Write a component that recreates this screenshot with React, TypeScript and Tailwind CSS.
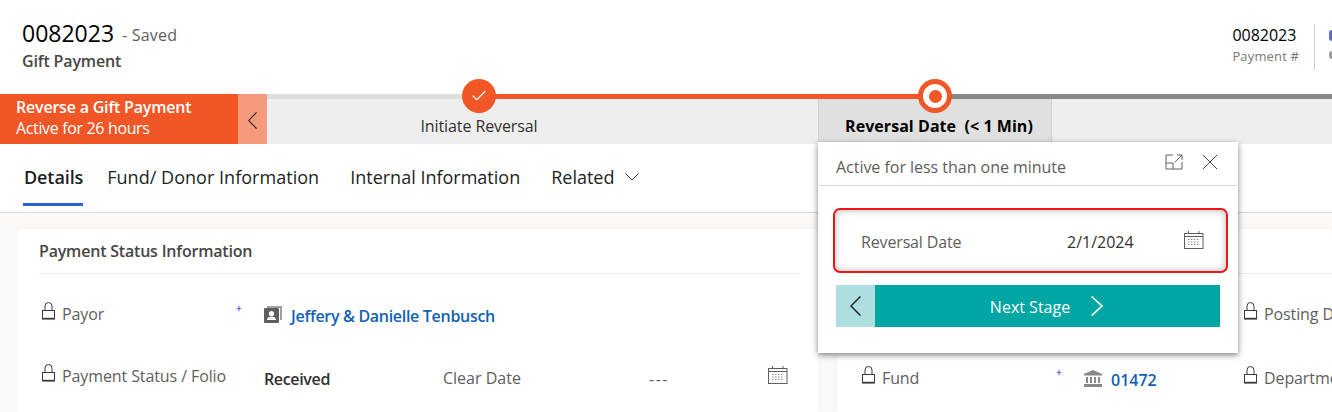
import {Check} from "lucide-react";

const font = "font-['Open_Sans','Noto_Sans',sans-serif]";

function Lock() {
    return (
        <svg width="13" height="18" viewBox="0 0 13 18" fill="none" stroke="#3b3a39" strokeWidth="1" className="shrink-0 -mt-[6px]">
            <rect x="0.5" y="8.5" width="12" height="8.5" fill="none" />
            <path d="M3 8.5V4a3.5 3.5 0 0 1 7 0v4.5" />
            <path d="M0.5 16.5h12" strokeWidth="1.4" />
        </svg>
    );
}

function CalendarIcon() {
    return (
        <svg width="20" height="18" viewBox="0 0 20 18" fill="none" stroke="#605e5c" strokeWidth="1" className="shrink-0 -mt-[2px]">
            <rect x="0.5" y="2.5" width="18.5" height="15" />
            <path d="M0.5 5.5h18.5M4.5 0v3M15 0v3" />
            <path d="M4 8.5h12M4 11h12M4 13.5h12" stroke="#8a8886" strokeDasharray="1.5 1.5" />
        </svg>
    );
}

function PopoutIcon() {
    return (
        <svg width="18" height="16" viewBox="0 0 18 16" fill="none" stroke="#605e5c" strokeWidth="1">
            <path d="M8 1H1v14h16V8" />
            <path d="M1 9h7v6" />
            <path d="M10 8l7-7M12 1h5v5" />
        </svg>
    );
}

function CloseIcon() {
    return (
        <svg width="16" height="16" viewBox="0 0 16 16" fill="none" stroke="#484644" strokeWidth="1">
            <path d="M1 1l14 14M15 1L1 15" />
        </svg>
    );
}

function ChevronL({w, h, color}: {w: number; h: number; color: string}) {
    return (
        <svg width={w} height={h} viewBox="0 0 10 20" preserveAspectRatio="none" fill="none" stroke={color} strokeWidth="1.3">
            <path d="M9.5 0.5L0.8 10l8.7 9.5" />
        </svg>
    );
}

function ChevronR({w, h, color}: {w: number; h: number; color: string}) {
    return (
        <svg width={w} height={h} viewBox="0 0 10 20" preserveAspectRatio="none" fill="none" stroke={color} strokeWidth="1.5">
            <path d="M0.5 0.5L9.2 10l-8.7 9.5" />
        </svg>
    );
}

function ChevronDownIcon() {
    return (
        <svg width="14" height="8" viewBox="0 0 14 8" fill="none" stroke="#323130" strokeWidth="1">
            <path d="M0.5 0.5L7 7l6.5-6.5" />
        </svg>
    );
}

function ContactIcon() {
    return (
        <svg width="19" height="18" viewBox="0 0 19 18" className="shrink-0">
            <path d="M3 1h15v14H16V3H3z" fill="#a19f9d" />
            <rect x="0" y="3" width="15" height="15" rx="1" fill="#605e5c" />
            <circle cx="7.5" cy="8.5" r="2.6" fill="#fff" />
            <path d="M3 15c.5-3 2.5-3.5 4.5-3.5s4 .5 4.5 3.5z" fill="#fff" />
        </svg>
    );
}

function BankIcon() {
    return (
        <svg width="20" height="17" viewBox="0 0 20 17" fill="#8a8886" className="shrink-0">
            <path d="M10 0l9 4v1.5H1V4z" />
            <path d="M3 7h2v6H3zM7 7h2v6H7zM11 7h2v6h-2zM15 7h2v6h-2z" />
            <path d="M1 14h18v3H1z" />
        </svg>
    );
}

function Label({text}: {text: string}) {
    return (
        <div className="flex items-center gap-[7px] text-[#605e5c] text-[16px] tracking-[-0.1px] whitespace-nowrap">
            <Lock />
            <span>{text}</span>
        </div>
    );
}

function Plus() {
    return <span className="text-[#0000ee] text-[10px] leading-none -mt-[11px]">+</span>;
}

export default function App() {
    return (
        <div className={`${font} relative w-[1332px] h-[412px] overflow-hidden bg-white text-[#323130]`}>
            {/* header */}
            <div className="h-[94px] flex justify-between">
                <div className="pl-[22px] pt-[17px]">
                    <div className="flex items-baseline gap-[8px]">
                        <span className="text-[23px] leading-[32px] text-black">0082023</span>
                        <span className="text-[16px] text-[#605e5c] tracking-[0.2px] -translate-y-px">- Saved</span>
                    </div>
                    <div className="text-[16px] leading-[24px] font-semibold text-[#484644] tracking-[-0.15px]">Gift Payment</div>
                </div>
                <div className="flex pt-[24px] h-[70px]">
                    <div className="pr-[15px] border-r border-[#d2d0ce]">
                        <div className="text-[16px] leading-[22px] text-black">0082023</div>
                        <div className="text-[13px] leading-[20px] text-[#797775] tracking-[0.15px]">Payment #</div>
                    </div>
                    <div className="pl-[14px] pt-[6px]">
                        <div className="w-[3px] h-[11px] bg-[#6b69d6] rounded-l-full" />
                        <div className="w-[3px] h-[8px] mt-[10px] bg-[#a19f9d] rounded-l-full" />
                    </div>
                </div>
            </div>

            {/* business process bar */}
            <div className="relative h-[50px] flex bg-[#eeeeee]">
                <div className="w-[238px] bg-[#f15626] text-white pl-4 pt-[3px] shrink-0 whitespace-nowrap">
                    <div className="text-[16px] leading-[21px] font-semibold tracking-[-0.2px]">Reverse a Gift Payment</div>
                    <div className="text-[16px] leading-[21px] tracking-[-0.35px]">Active for 26 hours</div>
                </div>
                <div className="w-[29px] bg-[#f59a7d] flex items-center justify-center shrink-0 pt-[2px]">
                    <ChevronL w={9} h={17} color="#201f1e" />
                </div>
                <div className="flex-1 flex flex-col">
                    <div className="h-[5px] flex shrink-0">
                        <div className="w-[213px] bg-[#dedede]" />
                        <div className="w-[455px] bg-[#f15626]" />
                        <div className="flex-1 bg-[#888888]" />
                    </div>
                    <div className="flex flex-1">
                        <div className="w-[551px] flex items-end justify-center pb-[8px] pr-[127px] text-[16px] leading-[20px] tracking-[-0.1px] text-[#323130] whitespace-nowrap">
                            Initiate Reversal
                        </div>
                        <div className="w-[234px] bg-[#e0e0e0] border-x border-[#d2d0ce] flex items-end justify-center pb-[8px] pl-[8px] text-[16px] leading-[20px] font-bold tracking-[0.05px] text-black whitespace-nowrap">
                            Reversal Date&nbsp;&nbsp;(&lt; 1 Min)
                        </div>
                    </div>
                </div>
                <div className="absolute left-[462px] top-[-15px] w-[34px] h-[34px] rounded-full bg-[#f15626] flex items-center justify-center">
                    <Check size={18} strokeWidth={1.5} color="#fff" />
                </div>
                <div className="absolute left-[918px] top-[-15px] w-[34px] h-[34px] rounded-full bg-white border-[5px] border-[#f15626] flex items-center justify-center">
                    <div className="w-[13px] h-[13px] rounded-full bg-[#f15626]" />
                </div>
            </div>

            {/* tabs */}
            <div className="h-[69px] flex items-start pl-[24px] border-b border-[#d8d6d4] text-[18px] text-[#201f1e] whitespace-nowrap">
                <div className="mt-[19px] mr-[24px] -ml-px pl-px font-semibold border-b-[3px] border-[#2563d9] h-[43px] leading-[28px] tracking-[-0.1px]">Details</div>
                <div className="mt-[19px] mr-[31px] leading-[28px] tracking-[0.03px]">Fund/ Donor Information</div>
                <div className="mt-[19px] mr-[31px] leading-[28px]">Internal Information</div>
                <div className="mt-[19px] flex items-center gap-[10px] leading-[28px]">
                    Related <ChevronDownIcon />
                </div>
            </div>

            {/* body */}
            <div className="bg-[#faf9f8] h-[199px] pl-[17px] pt-[16px] flex gap-[19px]">
                <div className="w-[801px] shrink-0 bg-white rounded-t-[5px] shadow-[0_0_2px_rgba(0,0,0,0.08)] pl-[22px] pr-[19px]">
                    <div className="h-[45px] flex items-center border-b border-[#edebe9] text-[16px] font-semibold text-[#484644] tracking-[-0.2px]">
                        Payment Status Information
                    </div>
                    <div className="pt-[9px] pl-[3px]">
                        <div className="h-[62px] flex items-center">
                            <div className="w-[194px] shrink-0"><Label text="Payor" /></div>
                            <div className="w-[28px] shrink-0 flex"><Plus /></div>
                            <ContactIcon />
                            <span className="ml-[8px] mt-[3px] text-[16px] font-semibold text-[#1160b7] tracking-[-0.3px] whitespace-nowrap">Jeffery &amp; Danielle Tenbusch</span>
                        </div>
                        <div className="h-[62px] flex items-center">
                            <div className="w-[222px] shrink-0"><Label text="Payment Status / Folio" /></div>
                            <span className="w-[179px] shrink-0 pt-[6px] text-[16px] font-semibold text-[#323130] tracking-[-0.35px]">Received</span>
                            <span className="w-[206px] shrink-0 pt-[4px] text-[16px] text-[#605e5c]">Clear Date</span>
                            <span className="w-[119px] shrink-0 pt-[6px] text-[16px] text-[#605e5c] tracking-[1.5px]">---</span>
                            <CalendarIcon />
                        </div>
                    </div>
                </div>
                <div className="flex-1 bg-white rounded-t-[5px] shadow-[0_0_2px_rgba(0,0,0,0.08)] pl-[25px] overflow-hidden">
                    <div className="h-[45px] border-b border-[#edebe9]" />
                    <div className="pt-[9px]">
                        <div className="h-[62px] flex items-center pl-[382px]">
                            <div className="-mr-[200px]"><Label text="Posting Date" /></div>
                        </div>
                        <div className="h-[66px] flex items-center">
                            <div className="w-[194px] shrink-0"><Label text="Fund" /></div>
                            <div className="w-[27px] shrink-0 flex"><Plus /></div>
                            <BankIcon />
                            <span className="ml-[8px] mt-[4px] w-[133px] shrink-0 text-[16px] font-semibold text-[#1160b7]">01472</span>
                            <Label text="Department" />
                        </div>
                    </div>
                </div>
            </div>

            {/* stage flyout */}
            <div className="absolute left-[818px] top-[142px] w-[420px] h-[211px] bg-white shadow-[0_2px_6px_rgba(0,0,0,0.5)]">
                <div className="h-[44px] mx-px flex items-center justify-between pl-[17px] pr-[19px] border-b border-[#d8d6d4] pt-[6px]">
                    <span className="text-[16px] text-[#605e5c] tracking-[-0.03px]">Active for less than one minute</span>
                    <div className="flex items-center gap-[19px] -mt-[9px]">
                        <PopoutIcon />
                        <CloseIcon />
                    </div>
                </div>
                <div className="ml-[15px] w-[395px] mt-[22px] h-[65px] border-2 border-[#f01414] rounded-[7px] shadow-[inset_0_0_7px_rgba(0,0,0,0.3)] flex items-center pl-[26px] pr-[22px] text-[16px]">
                    <span className="w-[206px] pt-[2px] text-[#605e5c] tracking-[-0.15px]">Reversal Date</span>
                    <span className="flex-1 pt-[2px] text-[#323130]">2/1/2024</span>
                    <CalendarIcon />
                </div>
                <div className="mx-[18px] mt-[12px] h-[42px] flex">
                    <div className="w-[39px] bg-[#addfe0] flex items-center justify-center">
                        <ChevronL w={11} h={20} color="#201f1e" />
                    </div>
                    <div className="flex-1 bg-[#00a6a3] flex items-center justify-center gap-[21px] pr-[2px] text-white text-[16px]">
                        <span className="pt-[2px]">Next Stage</span>
                        <ChevronR w={12} h={20} color="#fff" />
                    </div>
                </div>
            </div>
        </div>
    );
}
